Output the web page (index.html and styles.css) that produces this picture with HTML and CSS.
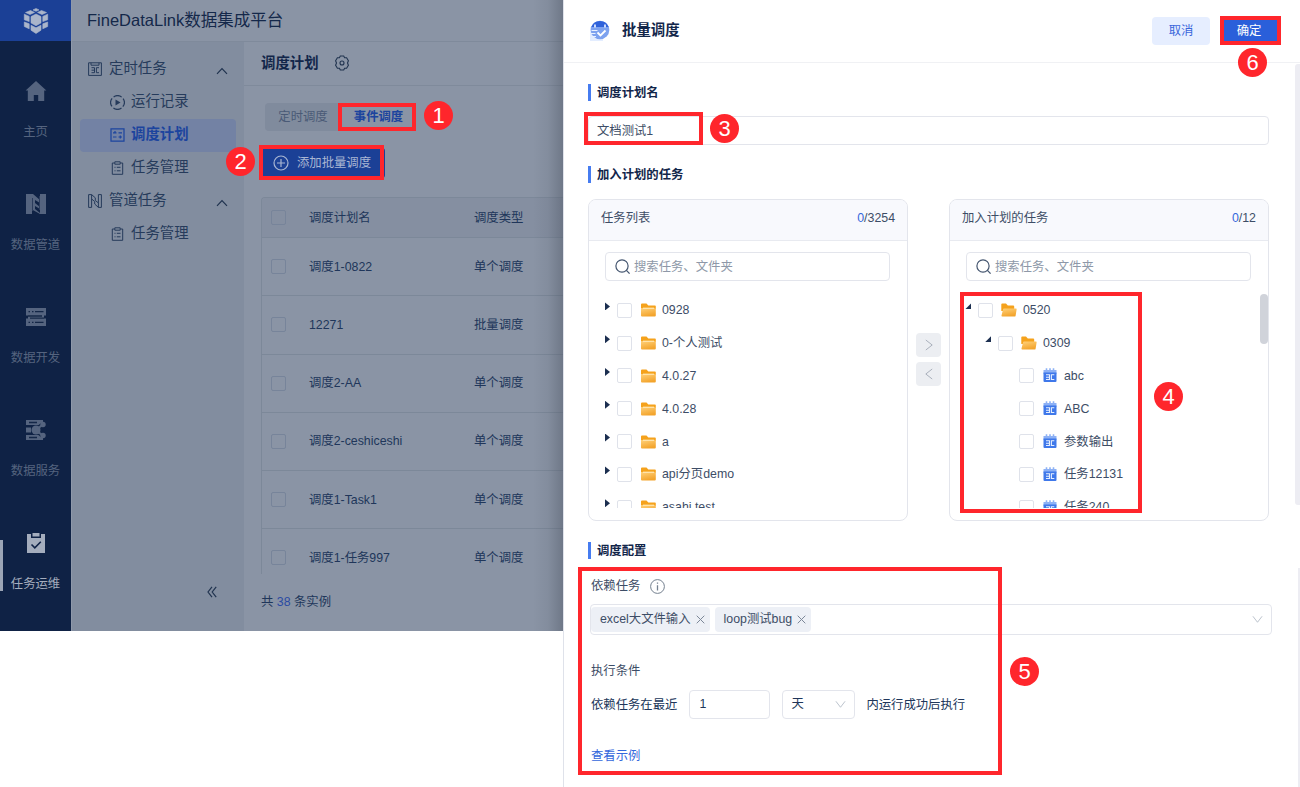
FILE: index.html
```html
<!DOCTYPE html>
<html lang="zh-CN">
<head>
	<meta charset="UTF-8">
	<title>FineDataLink数据集成平台</title>
	<link rel="stylesheet" href="styles.css">
</head>
<body>
	<svg class="defs">
		<symbol id="i-folder" viewBox="0 0 15 14"><path d="M0 1.5Q0 .5 1 .5h4.5l1.8 2H14q.8 0 .8.8V6H0z" fill="#f5a21c"/><path d="M0 5h14.8v7.6q0 1-1 1H1q-1 0-1-1z" fill="url(#gf)"/><path d="M2 5.2h11" stroke="#fff0c8" stroke-width="1"/></symbol>
		<symbol id="i-open" viewBox="0 0 16 14"><path d="M.3 1.3Q.3.4 1.2.4H5l1.8 2h5.4q1 0 1 1V8H.3z" fill="#f5a21c"/><path d="M3 5.6h12q.8 0 .6.8l-1 6.3q-.1.9-1 .9H1.3q-1 0-.8-1l1.5-6.2q.2-.8 1-.8z" fill="url(#gf)"/></symbol>
		<symbol id="i-task" viewBox="0 0 14 15"><path d="M.5 2h13v4H.5z" fill="#8db1f5"/><path d="M3.5.3v2.2M7 .3v2.2M10.5.3v2.2" stroke="#8db1f5" stroke-width="1.6"/><path d="M.5 4.5h13V13q0 1-1 1h-11q-1 0-1-1z" fill="#3f78ea"/><path d="M3 6.8h3.5v4.7H3M3 9.2h3.3M11.3 6.8H8.4v4.7h2.9" stroke="#e6efff" stroke-width="1.1" fill="none"/></symbol>
		<symbol id="i-search" viewBox="0 0 16 16"><circle cx="7" cy="7" r="6.1" fill="none" stroke="#44556f" stroke-width="1.2"/><path d="M11.4 11.4l3.2 3.2" stroke="#44556f" stroke-width="1.3"/></symbol>
		<symbol id="i-clip" viewBox="0 0 14 14"><path d="M4 2H1.8v11.3h10.4V2H10M4.3.8h5.4v2.4H4.3zM4 6.3h1m1.3 0H10M4 9.8h1m1.3 0H10" fill="none" stroke="#263b5b"/></symbol>
		<symbol id="i-up" viewBox="0 0 12 8"><path d="M1 6.8l5-5.3 5 5.3" fill="none" stroke="#20334f" stroke-width="1.2"/></symbol>
		<symbol id="i-down" viewBox="0 0 12 9"><path d="M1 1l5 6.5L11 1" fill="none" stroke="#b6bdc8"/></symbol>
		<symbol id="i-close" viewBox="0 0 9 9"><path d="M.7.7l7.6 7.6M8.3.7L.7 8.3" fill="none" stroke="#7c8798"/></symbol>
		<linearGradient id="gf" x2="0.4" y2="1"><stop stop-color="#ffd17a"/><stop offset="1" stop-color="#f3a42c"/></linearGradient>
	</svg>

	<div class="app">
		<div class="rail">
			<div class="logo">
				<svg width="26" height="28" viewBox="0 0 26 28">
					<g fill="#aab5ca" stroke="#aab5ca" stroke-width=".6" stroke-linejoin="round">
						<path d="M13 1.5l3 1.4-3 1.4-3-1.4z"/>
						<path d="M7.5 3.5l4 1.9L7 7.5l-4.500-2zM18.5 3.5l-4 1.9L19 7.5l4.500-2z"/>
						<path d="M13 7l5 2.600v6.300L13 18.7l-5-2.800V9.6z"/>
						<path d="M1.3 7.2L6.2 9.400v5.200L1.3 12.800zM24.7 7.2l-4.900 2.200v5.200l4.900-1.800z"/>
						<path d="M1.3 15l4.900 1.800v5L1.3 19.500zM24.7 15l-4.900 1.800v5l4.900-2.300z"/>
						<path d="M8 18.2l5 2.600 5-2.600v5L13 26.500l-5-3.300z"/>
					</g>
				</svg>
			</div>
			<div class="rail-item">
				<svg width="22" height="20" viewBox="0 0 22 20"><path d="M11 0L.6 9.500h2.200V20h6v-6h4.400v6h6V9.500h2.200z" fill="#55647f"/></svg>
				<p>主页</p>
			</div>
			<div class="rail-item">
				<svg width="20" height="20" viewBox="0 0 20 20"><path d="M0 0h6v20H0zM14 0h6v20h-6z" fill="#55647f"/><path d="M5 0h2l7 6v3L9 6v3l5 4v2l-5-3v3l5 4v1l-9-5z" fill="#55647f"/><path d="M6.5 4v13M13.5 2v14" stroke="#2b3c5c"/></svg>
				<p>数据管道</p>
			</div>
			<div class="rail-item">
				<svg width="20" height="20" viewBox="0 0 20 20"><path d="M0 1h20v7.5h-2v3h2V19H0v-7.5h2v-3H0z" fill="#55647f"/><path d="M2.5 4.7H4m2 0h1.5m1.5 0h8.5M2.5 15.3H4m2 0h1.5m1.5 0h8.5M2 9h14M4 11.2h14" stroke="#142747" stroke-width="1.3"/></svg>
				<p>数据开发</p>
			</div>
			<div class="rail-item">
				<svg width="20" height="20" viewBox="0 0 20 20"><path d="M0 0h17v5H0zM0 7.5h5v5H0zM0 15h17v5H0z" fill="#55647f"/><path d="M3 2.5h8M3 17.5h8" stroke="#142747" stroke-width="1.3"/><path d="M10 10l6.5-5.3M10 10l6.5 5.5" stroke="#142747" stroke-width="4.5"/><path d="M10 10l6.5-5.3M10 10l6.5 5.5" stroke="#55647f" stroke-width="2"/><circle cx="10" cy="10" r="4.5" fill="#55647f"/><circle cx="17" cy="4.5" r="2.7" fill="#55647f"/><circle cx="17" cy="15.5" r="2.7" fill="#55647f"/></svg>
				<p>数据服务</p>
			</div>
			<div class="rail-item active">
				<svg width="20" height="20" viewBox="0 0 20 20"><path d="M1 1h4v4h10V1h4v19H1z" fill="#a4adbd"/><path d="M6.5 0h7v3.5h-7z" fill="#a4adbd"/><path d="M5.5 11.5l3.3 3.3 6-6" fill="none" stroke="#102347" stroke-width="1.6"/></svg>
				<p>任务运维</p>
			</div>
		</div>
		<div class="platform">
			<div class="top-title">FineDataLink数据集成平台</div>
			<div class="work">
				<div class="side">
					<div class="nav nav-group">
						<svg width="14" height="14" viewBox="0 0 14 14"><path d="M.6.8h12.8v12.6H.6zM3 .8v2.4h8V.8M3.5 5.7h3v5h-3M3.5 8.2h3M11 5.7H8.4v5H11" fill="none" stroke="#263b5b"/></svg>
						<span>定时任务</span>
						<svg class="arrow" width="12" height="8"><use href="#i-up"/></svg>
					</div>
					<div class="nav">
						<svg width="15" height="15" viewBox="0 0 15 15"><circle cx="7.5" cy="7.5" r="6.8" fill="none" stroke="#263b5b" stroke-width="1.2" stroke-dasharray="8.5 2.18" stroke-dashoffset="-1.1" transform="rotate(45 7.5 7.5)"/><path d="M5.5 4.5l5 3-5 3z" fill="#263b5b"/></svg>
						<span>运行记录</span>
					</div>
					<div class="nav active">
						<svg width="15" height="14" viewBox="0 0 15 14"><path d="M1 .8h13v12.4H1zM3 4.8h3.5M5 3v1.8M8.5 4.8H12M3 9h3.5M8.5 9H12M10.3 7.5v3" fill="none" stroke="#1c449e" stroke-width="1.2"/></svg>
						<span>调度计划</span>
					</div>
					<div class="nav">
						<svg width="15" height="14"><use href="#i-clip"/></svg>
						<span>任务管理</span>
					</div>
					<div class="nav nav-group">
						<svg width="14" height="14" viewBox="0 0 14 14"><path d="M.6.6h3l3.7 3.2v2.7l3.1 2.4V.6h3v12.8h-3L6.7 10V7.5L3.6 5v8.4h-3zM3.6.6V5M10.4 8.9v4.5" fill="none" stroke="#263b5b"/></svg>
						<span>管道任务</span>
						<svg class="arrow" width="12" height="8"><use href="#i-up"/></svg>
					</div>
					<div class="nav">
						<svg width="15" height="14"><use href="#i-clip"/></svg>
						<span>任务管理</span>
					</div>
					<div class="fold"><svg width="10" height="12" viewBox="0 0 10 12"><path d="M5 .8L1 6l4 5.2M9.2.8l-4 5.2 4 5.2" fill="none" stroke="#20334f" stroke-width="1.2"/></svg></div>
				</div>
				<div class="main">
					<div class="main-head">
						<h1>调度计划</h1>
						<svg width="16" height="16" viewBox="0 0 16 16"><path d="M6.3 1h3.4l.9 1.7 2 .1 1.8 3L13.5 8l.9 2.2-1.8 3-2 .1L9.7 15H6.3l-.9-1.7-2-.1-1.800-3L2.5 8l-.9-2.200 1.800-3 2-.1z" fill="none" stroke="#20334f" stroke-width="1.1"/><circle cx="8" cy="8" r="2" fill="none" stroke="#20334f" stroke-width="1.1"/></svg>
					</div>
					<div class="tabs"><span>定时调度</span><span class="on">事件调度</span></div>
					<div class="add-btn">
						<svg width="16" height="16" viewBox="0 0 16 16"><path d="M8 4v8M4 8h8" stroke="#a9b6d3" stroke-width="1.2"/><circle cx="8" cy="8" r="7" fill="none" stroke="#a9b6d3" stroke-width="1.2"/></svg>
						<span>添加批量调度</span>
					</div>
					<div class="table">
						<div class="tr th"><i class="box"></i><span class="c1">调度计划名</span><span>调度类型</span></div>
						<div class="tr"><i class="box"></i><span class="c1">调度1-0822</span><span>单个调度</span></div>
						<div class="tr"><i class="box"></i><span class="c1">12271</span><span>批量调度</span></div>
						<div class="tr"><i class="box"></i><span class="c1">调度2-AA</span><span>单个调度</span></div>
						<div class="tr"><i class="box"></i><span class="c1">调度2-ceshiceshi</span><span>单个调度</span></div>
						<div class="tr"><i class="box"></i><span class="c1">调度1-Task1</span><span>单个调度</span></div>
						<div class="tr"><i class="box"></i><span class="c1">调度1-任务997</span><span>单个调度</span></div>
					</div>
					<div class="total">共 <b>38</b> 条实例</div>
				</div>
			</div>
		</div>
	</div>

	<div class="drawer">
		<div class="drawer-head">
			<svg width="21" height="21" viewBox="0 0 21 21"><path d="M1 7h13v14H1z" fill="#e3edff"/><circle cx="11" cy="10" r="9.3" fill="#7da2ef"/><path d="M2.3 7A9.3 9.3 0 0 1 19.7 7z" fill="#2f62da"/><path d="M6 4.5v3M16 4.5v3" stroke="#dce8ff" stroke-width="1.8"/><path d="M2.5 10.5h6M1.5 13.5h5M3 16.5h4" stroke="#e8f0ff" stroke-width="1.2"/><path d="M8.5 12.5l3 3 5-5" fill="none" stroke="#fff" stroke-width="1.8"/></svg>
			<h2>批量调度</h2>
			<div class="btn cancel">取消</div>
			<div class="btn ok">确定</div>
		</div>
		<div class="drawer-body">
			<h3>调度计划名</h3>
			<div class="input name">文档测试1</div>
			<h3 class="t2">加入计划的任务</h3>
			<div class="transfer">
				<div class="panel">
					<div class="panel-head"><span>任务列表</span><span><b>0</b>/3254</span></div>
					<div class="input search"><svg width="16" height="16"><use href="#i-search"/></svg>搜索任务、文件夹</div>
					<div class="tree">
						<div class="node"><i class="tri"></i><i class="box"></i><svg width="15" height="14"><use href="#i-folder"/></svg>0928</div>
						<div class="node"><i class="tri"></i><i class="box"></i><svg width="15" height="14"><use href="#i-folder"/></svg>0-个人测试</div>
						<div class="node"><i class="tri"></i><i class="box"></i><svg width="15" height="14"><use href="#i-folder"/></svg>4.0.27</div>
						<div class="node"><i class="tri"></i><i class="box"></i><svg width="15" height="14"><use href="#i-folder"/></svg>4.0.28</div>
						<div class="node"><i class="tri"></i><i class="box"></i><svg width="15" height="14"><use href="#i-folder"/></svg>a</div>
						<div class="node"><i class="tri"></i><i class="box"></i><svg width="15" height="14"><use href="#i-folder"/></svg>api分页demo</div>
						<div class="node"><i class="tri"></i><i class="box"></i><svg width="15" height="14"><use href="#i-folder"/></svg>asahi test</div>
					</div>
				</div>
				<div class="moves">
					<div><svg width="8" height="12" viewBox="0 0 8 12"><path d="M.8 1l6.4 5-6.4 5" fill="none" stroke="#a9b0bb"/></svg></div>
					<div><svg width="8" height="12" viewBox="0 0 8 12"><path d="M7.2 1L.8 6l6.4 5" fill="none" stroke="#a9b0bb"/></svg></div>
				</div>
				<div class="panel joined">
					<div class="panel-head"><span>加入计划的任务</span><span><b>0</b>/12</span></div>
					<div class="input search"><svg width="16" height="16"><use href="#i-search"/></svg>搜索任务、文件夹</div>
					<div class="tree">
						<div class="node"><i class="tri down"></i><i class="box"></i><svg width="16" height="14"><use href="#i-open"/></svg>0520</div>
						<div class="node lv2"><i class="tri down"></i><i class="box"></i><svg width="16" height="14"><use href="#i-open"/></svg>0309</div>
						<div class="node lv3"><i class="box"></i><svg width="14" height="15"><use href="#i-task"/></svg>abc</div>
						<div class="node lv3"><i class="box"></i><svg width="14" height="15"><use href="#i-task"/></svg>ABC</div>
						<div class="node lv3"><i class="box"></i><svg width="14" height="15"><use href="#i-task"/></svg>参数输出</div>
						<div class="node lv3"><i class="box"></i><svg width="14" height="15"><use href="#i-task"/></svg>任务12131</div>
						<div class="node lv3"><i class="box"></i><svg width="14" height="15"><use href="#i-task"/></svg>任务240</div>
					</div>
					<div class="thumb"></div>
				</div>
			</div>
			<h3 class="t3">调度配置</h3>
			<div class="config">
				<div class="label">依赖任务<svg width="15" height="15" viewBox="0 0 15 15"><circle cx="7.5" cy="7.5" r="6.9" fill="none" stroke="#74808f"/><path d="M7.5 3.5v1.3M7.5 6.3v5.2" stroke="#74808f" stroke-width="1.3"/></svg></div>
				<div class="input tags">
					<span class="tag">excel大文件输入<svg width="9" height="9"><use href="#i-close"/></svg></span>
					<span class="tag">loop测试bug<svg width="9" height="9"><use href="#i-close"/></svg></span>
					<svg class="caret" width="11" height="9"><use href="#i-down"/></svg>
				</div>
				<div class="label cond">执行条件</div>
				<div class="rule">
					<span>依赖任务在最近</span>
					<div class="input num">1</div>
					<div class="input unit">天<svg width="11" height="9"><use href="#i-down"/></svg></div>
					<span>内运行成功后执行</span>
				</div>
				<a class="link">查看示例</a>
			</div>
		</div>
		<div class="bar bar-top"></div>
		<div class="bar bar-bottom"></div>
	</div>

	<div class="mark m1"></div>
	<div class="mark m2"></div>
	<div class="mark m3"></div>
	<div class="mark m4"></div>
	<div class="mark m5"></div>
	<div class="mark m6"></div>
	<div class="dot d1">1</div>
	<div class="dot d2">2</div>
	<div class="dot d3">3</div>
	<div class="dot d4">4</div>
	<div class="dot d5">5</div>
	<div class="dot d6">6</div>
</body>
</html>
```
FILE: styles.css
```css
*{margin:0; padding:0; box-sizing:border-box;}
body{
	display: flex;
	width: 1300px;
	height: 787px;
	overflow: hidden;
	background: #fff;
	color: #3d4d66;
	font: 12.35px/18px "Liberation Sans","Noto Sans CJK SC",sans-serif;
	position: relative;
	white-space: nowrap;
}
svg{flex: none; display: block;}
b{font-weight: normal;}
.defs{position: absolute; width: 0; height: 0;}
.box{
	flex: none;
	width: 15px;
	height: 15px;
	border: solid 1px #dfe2ea;
	border-radius: 2px;
}

/* 左侧平台 */
.app{
	position: relative;
	flex: none;
	display: flex;
	width: 563px;
	height: 631px;
	background: #8a94a5;
	overflow: hidden;
}
.app:after{
	content: "";
	position: absolute;
	right: 0;
	top: 0;
	width: 30px;
	height: 631px;
	background: linear-gradient(to right, rgba(70,78,92,0), rgba(70,78,92,.1) 50%, rgba(70,78,92,.4));
}
.rail{
	width: 71px;
	background: #0f2245;
	color: #55647f;
}
.logo{
	height: 41px;
	background: #1b4096;
	display: flex;
	align-items: center;
	justify-content: center;
}
.rail-item{
	height: 113px;
	padding-top: 40px;
	display: flex;
	flex-direction: column;
	align-items: center;
	gap: 22px;
}
.rail-item.active{color: #a4adbd; position: relative;}
.rail-item.active:before{
	content: "";
	position: absolute;
	left: 0;
	top: 47px;
	width: 3px;
	height: 51px;
	background: #9ba5b5;
}
.platform{flex: 1; border-left: solid 1px #8f99ab;}
.top-title{
	height: 41px;
	padding-left: 15px;
	line-height: 40px;
	font-size: 16.5px;
	color: #14284a;
}
.work{display: flex; height: 590px; border-top: solid 1px #7f8a9b;}
.side{
	width: 172px;
	padding: 11px 8px 0;
	background: #828d9f;
}
.nav{
	display: flex;
	align-items: center;
	height: 33px;
	padding: 0 8px 3px 30px;
	font-size: 14.4px;
	color: #263b5b;
	border-radius: 4px;
}
.nav span{margin-left: 6px;}
.nav svg{position: relative; top: 1px;}
.nav-group{padding-left: 8px;}
.nav-group span{margin-left: 7px;}
.nav .arrow{margin-left: auto; top: 3px;}
.nav.active{
	background: #7382a4;
	color: #1c449e;
	font-weight: bold;
}
.fold{margin: 335px 0 0 127px;}
.main{flex: 1; color: #20365a;}
.main-head{
	display: flex;
	align-items: center;
	gap: 15px;
	height: 44px;
	padding: 0 0 1px 17px;
	border-bottom: solid 1px #7f8a9b;
}
.main-head h1{font-size: 14.4px; color: #12264a;}
.tabs{
	display: flex;
	width: 151px;
	height: 28px;
	margin: 17px 0 0 21px;
	line-height: 28px;
	background: #808b9d;
	border-radius: 4px;
}
.tabs span{width: 76px; text-align: center; color: #4a5a76;}
.tabs .on{
	width: 75px;
	background: #8a94a5;
	color: #1c449e;
	font-weight: bold;
}
.add-btn{
	display: flex;
	align-items: center;
	gap: 8px;
	width: 124px;
	height: 30px;
	margin: 17px 0 0 17px;
	padding-left: 12px;
	background: #1b4096;
	color: #a9b6d3;
	border-radius: 3px;
}
.table{
	height: 377px;
	margin: 19px 0 0 17px;
	border: solid 1px #7c8899;
	border-width: 1px 0 0 1px;
	border-radius: 4px 0 0 0;
	overflow: hidden;
}
.tr{
	display: flex;
	align-items: center;
	height: 58.25px;
	padding-left: 9px;
	border-bottom: solid 1px #7c8899;
}
.th{height: 40px; background: #858fa1;}
.tr .box{border-color: #77849a;}
.c1{width: 165px; margin-left: 23px;}
.total{margin: 19px 0 0 17px;}
.total b{color: #2b4ba3;}

/* 右侧抽屉 */
.drawer{
	position: relative;
	flex: 1;
	min-width: 0;
	border-left: solid 1px #dfe2ea;
}
.drawer-head{
	display: flex;
	align-items: center;
	height: 63px;
	padding: 0 22px 2px 25px;
	border-bottom: solid 1px #f0f1f4;
}
.drawer-head h2{margin: 0 auto 0 12px; font-size: 14.4px; color: #12264a;}
.btn{
	width: 58px;
	height: 28px;
	line-height: 29px;
	margin-top: 1px;
	text-align: center;
	border-radius: 4px;
}
.cancel{background: #e6eeff; color: #3a66db;}
.ok{margin-left: 10px; background: #2a5fda; color: #fff;}
.drawer-body{padding: 21px 31px 0 24px;}
h3{
	height: 17px;
	line-height: 19px;
	padding-left: 6px;
	border-left: solid 3px #467cf0;
	font-size: 12.35px;
	color: #12264a;
}
.input{
	display: flex;
	align-items: center;
	border: solid 1px #e3e5ec;
	border-radius: 4px;
	background: #fff;
}
.name{height: 29px; margin-top: 15px; padding-left: 8px;}
.t2{margin-top: 21px;}
.transfer{display: flex; margin-top: 16px;}
.panel{
	position: relative;
	width: 320px;
	height: 322px;
	border: solid 1px #e3e5ec;
	border-radius: 8px;
	overflow: hidden;
}
.panel-head{
	display: flex;
	justify-content: space-between;
	height: 41px;
	padding: 0 12px;
	line-height: 36px;
	background: #f8f9fd;
	border-bottom: solid 1px #e8eaf0;
}
.panel-head b, .link{color: #3467dc;}
.search{
	height: 29px;
	margin: 11px 17px 0 16px;
	padding-left: 9px;
	gap: 3px;
	color: #8e98a8;
}
.tree{
	height: 214px;
	margin-top: 13px;
	padding-left: 16px;
	overflow: hidden;
}
.node{
	display: flex;
	align-items: center;
	height: 32.8px;
}
.node svg{margin: 0 6px 0 9px;}
.tri{width: 12px; height: 16px;}
.tri:before{
	content: "";
	display: block;
	width: 5px;
	height: 8px;
	background: #1c2f50;
	clip-path: polygon(0 0, 100% 50%, 0 100%);
}
.tri.down{width: 13px;}
.tri.down:before{width: 6px; height: 6px; margin-top: 1px; clip-path: polygon(100% 0, 100% 100%, 0 100%);}
.joined .tree{padding-left: 15px;}
.joined .node svg{margin: 0 6px 0 8px;}
.lv2{padding-left: 20px;}
.lv3{padding-left: 54px;}
.joined .lv3 svg{margin: 0 7px 0 9px;}
.thumb{
	position: absolute;
	right: 0;
	top: 94px;
	width: 8px;
	height: 50px;
	border-radius: 4px;
	background: #d0d3da;
}
.moves{
	display: flex;
	flex-direction: column;
	gap: 5px;
	width: 41px;
	padding: 134px 0 0 8px;
}
.moves div{
	display: flex;
	align-items: center;
	justify-content: center;
	width: 25px;
	height: 24px;
	border-radius: 4px;
	background: #eceef2;
}
.t3{margin-top: 21px;}
.config{padding: 18px 0 0 3px;}
.label{display: flex; align-items: center; gap: 10px;}
.tags{
	width: 682px;
	height: 31px;
	margin: 9px 0 0 -1px;
	padding-bottom: 1px;
	gap: 5px;
}
.tag{
	display: flex;
	align-items: center;
	gap: 5px;
	height: 25px;
	padding: 0 5px 0 9px;
	background: #edf0f6;
	border-radius: 4px;
}
.caret{margin: 0 8px 0 auto;}
.cond{margin-top: 27px;}
.rule{
	display: flex;
	align-items: center;
	gap: 12px;
	height: 30px;
	margin-top: 9px;
	color: #20365a;
}
.rule span{padding-top: 2px;}
.num{width: 81px; height: 29px; padding-left: 9px;}
.unit{width: 73px; height: 29px; margin-right: -1px; padding: 0 8px; justify-content: space-between;}
.link{display: block; margin-top: 28px;}
.bar{position: absolute; right: 0; background: #ededf3;}
.bar-top{top: 64px; width: 5px; height: 441px; border-radius: 3px 0 0 3px;}
.bar-bottom{top: 568px; width: 2px; height: 219px;}

/* 步骤标注 */
.mark{position: absolute; border: solid 4px #ff262c;}
.m1{left: 338px; top: 103px; width: 78px; height: 28px;}
.m2{left: 259px; top: 145px; width: 125px; height: 35px;}
.m3{left: 584px; top: 112px; width: 119px; height: 33px;}
.m4{left: 960px; top: 292px; width: 182px; height: 221px;}
.m5{left: 578px; top: 567px; width: 424px; height: 208px;}
.m6{left: 1220px; top: 16px; width: 61px; height: 29px;}
.dot{
	position: absolute;
	width: 29px;
	height: 29px;
	border-radius: 50%;
	background: #ff262c;
	color: #fff;
	font-size: 22px;
	line-height: 29px;
	text-align: center;
}
.d1{left: 424px; top: 101px;}
.d2{left: 226px; top: 147px;}
.d3{left: 710px; top: 114px;}
.d4{left: 1154px; top: 382px;}
.d5{left: 1010px; top: 657px;}
.d6{left: 1238px; top: 48px;}
```
